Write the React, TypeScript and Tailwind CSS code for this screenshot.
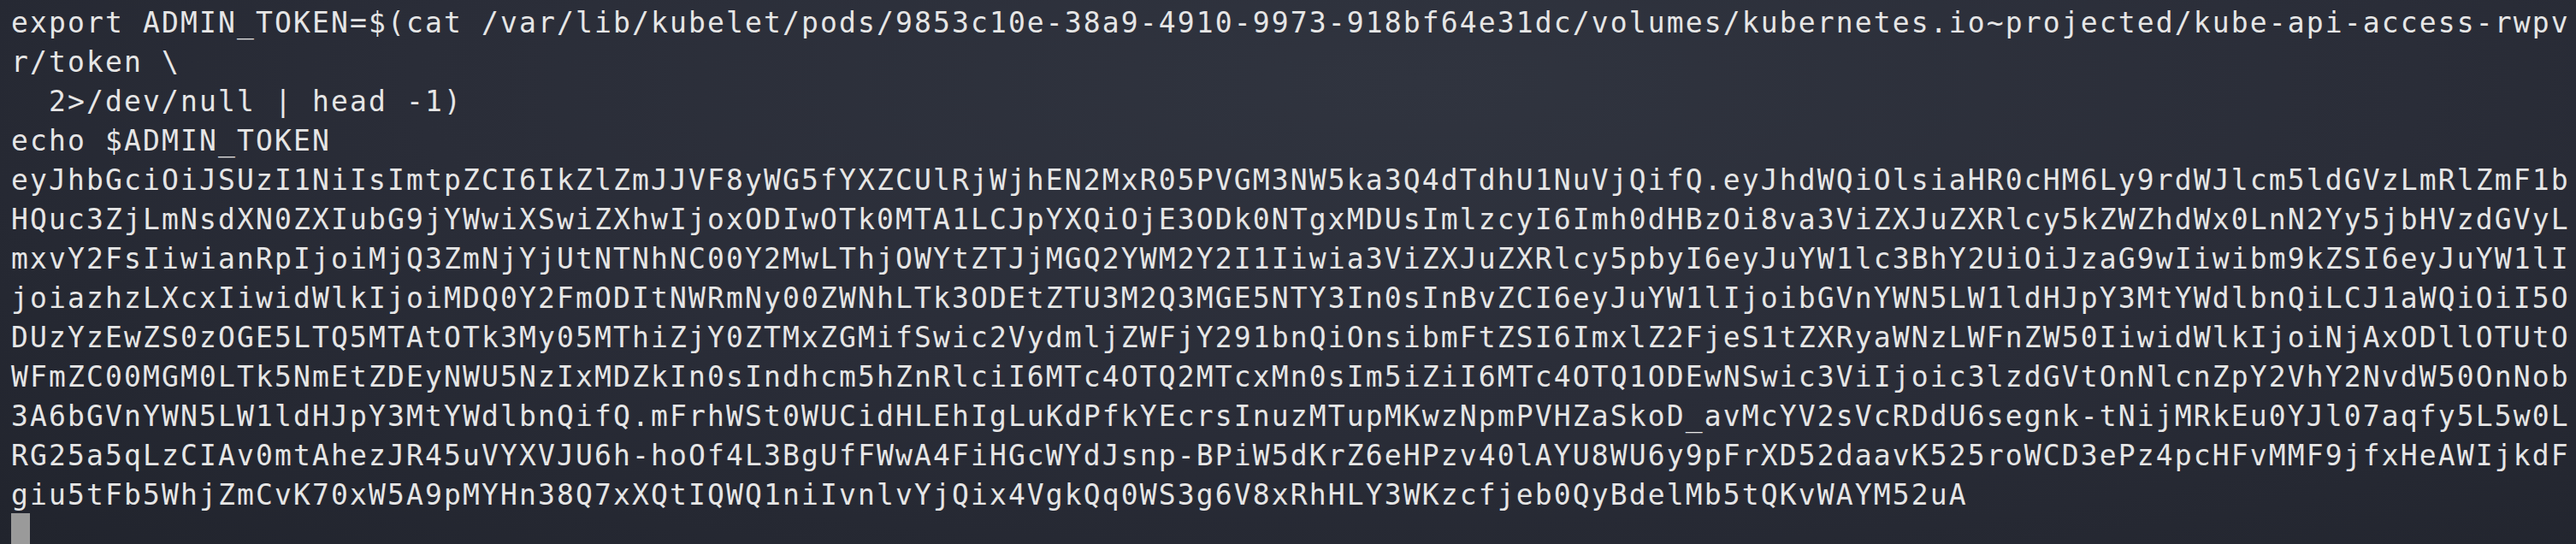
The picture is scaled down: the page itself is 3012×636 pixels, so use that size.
const lines = [
  'export ADMIN_TOKEN=$(cat /var/lib/kubelet/pods/9853c10e-38a9-4910-9973-918bf64e31dc/volumes/kubernetes.io~projected/kube-api-access-rwpv',
  'r/token \\',
  '  2>/dev/null | head -1)',
  'echo $ADMIN_TOKEN',
  'eyJhbGciOiJSUzI1NiIsImtpZCI6IkZlZmJJVF8yWG5fYXZCUlRjWjhEN2MxR05PVGM3NW5ka3Q4dTdhU1NuVjQifQ.eyJhdWQiOlsiaHR0cHM6Ly9rdWJlcm5ldGVzLmRlZmF1b',
  'HQuc3ZjLmNsdXN0ZXIubG9jYWwiXSwiZXhwIjoxODIwOTk0MTA1LCJpYXQiOjE3ODk0NTgxMDUsImlzcyI6Imh0dHBzOi8va3ViZXJuZXRlcy5kZWZhdWx0LnN2Yy5jbHVzdGVyL',
  'mxvY2FsIiwianRpIjoiMjQ3ZmNjYjUtNTNhNC00Y2MwLThjOWYtZTJjMGQ2YWM2Y2I1Iiwia3ViZXJuZXRlcy5pbyI6eyJuYW1lc3BhY2UiOiJzaG9wIiwibm9kZSI6eyJuYW1lI',
  'joiazhzLXcxIiwidWlkIjoiMDQ0Y2FmODItNWRmNy00ZWNhLTk3ODEtZTU3M2Q3MGE5NTY3In0sInBvZCI6eyJuYW1lIjoibGVnYWN5LW1ldHJpY3MtYWdlbnQiLCJ1aWQiOiI5O',
  'DUzYzEwZS0zOGE5LTQ5MTAtOTk3My05MThiZjY0ZTMxZGMifSwic2VydmljZWFjY291bnQiOnsibmFtZSI6ImxlZ2FjeS1tZXRyaWNzLWFnZW50IiwidWlkIjoiNjAxODllOTUtO',
  'WFmZC00MGM0LTk5NmEtZDEyNWU5NzIxMDZkIn0sIndhcm5hZnRlciI6MTc4OTQ2MTcxMn0sIm5iZiI6MTc4OTQ1ODEwNSwic3ViIjoic3lzdGVtOnNlcnZpY2VhY2NvdW50OnNob',
  '3A6bGVnYWN5LW1ldHJpY3MtYWdlbnQifQ.mFrhWSt0WUCidHLEhIgLuKdPfkYEcrsInuzMTupMKwzNpmPVHZaSkoD_avMcYV2sVcRDdU6segnk-tNijMRkEu0YJl07aqfy5L5w0L',
  'RG25a5qLzCIAv0mtAhezJR45uVYXVJU6h-hoOf4L3BgUfFWwA4FiHGcWYdJsnp-BPiW5dKrZ6eHPzv40lAYU8WU6y9pFrXD52daavK525roWCD3ePz4pcHFvMMF9jfxHeAWIjkdF',
  'giu5tFb5WhjZmCvK70xW5A9pMYHn38Q7xXQtIQWQ1niIvnlvYjQix4VgkQq0WS3g6V8xRhHLY3WKzcfjeb0QyBdelMb5tQKvWAYM52uA',
]

export default function App() {
  return (
    <div className="w-[3012px] h-[636px] overflow-hidden bg-[#242731] bg-radial-[at_55%_15%] from-[#30343f] via-[#2a2d38] to-[#21242d]">
      <div className="pl-[13px] pt-[4px] font-['DejaVu_Sans_Mono',monospace] text-[33px] tracking-[2.13px] text-[#e6e6e6]">
        {lines.map((line, i) => (
          <div key={i} className="h-[46px] leading-[46px] whitespace-pre">
            {line}
          </div>
        ))}
        <div className="h-[46px]">
          <div className="-mt-[2px] w-[22px] h-[46px] bg-[#9a9a9a]" />
        </div>
      </div>
    </div>
  )
}
